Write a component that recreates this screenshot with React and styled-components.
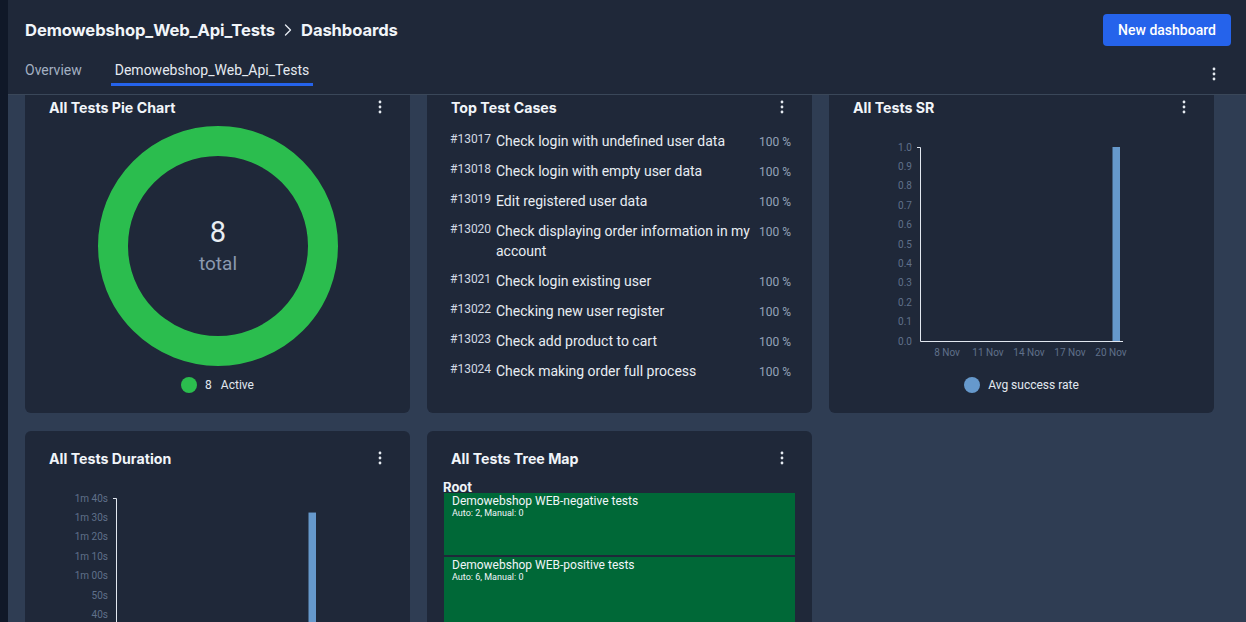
import React, { useLayoutEffect, useRef } from "react";
import styled, { createGlobalStyle } from "styled-components";

const GlobalStyle = createGlobalStyle`
  html, body { margin: 0; padding: 0; height: 100%; background: #1f2839; }
  body { font-family: Roboto, "Noto Sans", Arial, sans-serif; overflow: hidden; }
  #root { height: 100%; }
  * { box-sizing: border-box; }
`;

const headingFont = `Inter, Roboto, "Noto Sans", Arial, sans-serif`;

const Shell = styled.div`
  display: flex;
  height: 100vh;
  width: 100vw;
`;

const SideStrip = styled.div`
  width: 8px;
  flex: none;
  background: #101828;
`;

const Main = styled.div`
  flex: 1;
  min-width: 0;
  display: flex;
  flex-direction: column;
`;

const Header = styled.header`
  flex: none;
  height: 95px;
  background: #1f2839;
  border-bottom: 1px solid #3a4759;
  padding: 14px 15px 0 17px;
  display: flex;
  flex-direction: column;
`;

const TitleRow = styled.div`
  display: flex;
  align-items: center;
  justify-content: space-between;
  height: 32px;
`;

const Breadcrumb = styled.h1`
  margin: 0;
  display: flex;
  align-items: center;
  gap: 3px;
  font-family: ${headingFont};
  font-size: 16.6px;
  font-weight: 700;
  color: #f1f5f9;
  line-height: 20px;
  letter-spacing: -0.1px;
`;

const PrimaryButton = styled.button`
  height: 32px;
  width: 128px;
  padding: 0;
  background: #2563eb;
  color: #ffffff;
  border: none;
  border-radius: 4px;
  font-family: inherit;
  font-size: 14px;
  font-weight: 500;
  cursor: pointer;
`;

const TabsRow = styled.nav`
  display: flex;
  align-items: flex-start;
  margin-top: 10px;
  height: 30px;
  gap: 25px;
`;

const Tab = styled.div`
  height: 30px;
  padding: 0 4px;
  display: flex;
  align-items: center;
  border-bottom: 3px solid ${(p) => (p.$active ? "#2563eb" : "transparent")};
  color: ${(p) => (p.$active ? "#e5eaf1" : "#a3b0c2")};
  font-size: 14px;
  &:first-child { margin-left: -4px; }
`;

const Spacer = styled.div`
  flex: 1;
`;

const KebabButton = styled.button`
  background: none;
  border: none;
  padding: 0;
  display: flex;
  cursor: pointer;
  margin: ${(p) => p.$margin || "0"};
`;

const Scroller = styled.div`
  flex: 1;
  min-height: 0;
  overflow-y: scroll;
  color-scheme: dark;
  background: #2f3d53;
`;

const Grid = styled.div`
  display: grid;
  grid-template-columns: repeat(3, 385px);
  grid-auto-rows: 333px;
  gap: 18px 17px;
  padding: 16px 16px 56px 17px;
`;

const Card = styled.section`
  background: #1f2839;
  border-radius: 6px;
  display: flex;
  flex-direction: column;
  overflow: hidden;
`;

const CardHeader = styled.div`
  display: flex;
  align-items: center;
  justify-content: space-between;
  padding: 18px 28px 0 24px;
  height: 36px;
  flex: none;
`;

const CardTitle = styled.h2`
  margin: 0;
  font-family: ${headingFont};
  font-size: 14.2px;
  font-weight: 700;
  line-height: 18px;
  color: #f1f5f9;
  padding-top: 1px;
`;

const CenterBody = styled.div`
  display: flex;
  flex-direction: column;
  align-items: center;
  padding-top: ${(p) => p.$top ?? 10}px;
`;

const Legend = styled.div`
  display: flex;
  align-items: center;
  gap: 8px;
  margin-top: ${(p) => p.$top ?? 11}px;
  height: 16px;
  font-size: 12px;
  color: #e2e8f0;
`;

const Dot = styled.span`
  width: 16px;
  height: 16px;
  border-radius: 50%;
  background: ${(p) => p.$color};
  flex: none;
`;

const LegendCount = styled.span`
  margin-right: 1px;
`;

const CaseList = styled.div`
  padding: 10px 21px 0 23px;
`;

const CaseRow = styled.div`
  display: grid;
  grid-template-columns: 40px 1fr auto;
  column-gap: 6px;
  padding: 5px 0;
  align-items: start;
`;

const CaseId = styled.span`
  font-size: 12px;
  line-height: 16px;
  color: #d3dae4;
  white-space: nowrap;
`;

const CaseName = styled.span`
  font-size: 14px;
  line-height: 20px;
  color: #e8edf3;
  padding-right: 3px;
`;

const CasePct = styled.span`
  font-size: 12px;
  line-height: 18px;
  padding-top: 2px;
  margin-left: -1px;
  color: #94a3b8;
  white-space: nowrap;
`;

const TreeBody = styled.div`
  padding: 14px 17px 0 16px;
`;

const RootLabel = styled.div`
  font-family: ${headingFont};
  font-size: 13px;
  font-weight: 700;
  line-height: 12px;
  color: #eef2f7;
`;

const TreeMap = styled.div`
  display: flex;
  flex-direction: column;
  gap: 2px;
  height: 246px;
  margin-left: 1px;
`;

const TreeCell = styled.div`
  flex: ${(p) => p.$weight};
  background: #006837;
  padding: 1px 8px 0;
  color: #f1f5f9;
`;

const CellTitle = styled.div`
  font-size: 12px;
  line-height: 14px;
`;

const CellSub = styled.div`
  font-size: 9px;
  line-height: 11px;
`;

const ChartSvg = styled.svg`
  display: block;
  margin-top: 10px;
  flex: none;
`;

function Kebab({ margin }) {
  return (
    <KebabButton $margin={margin} aria-label="More">
      <svg width="4" height="14" viewBox="0 0 4 14">
        <circle cx="2" cy="2" r="1.4" fill="#e5eaf1" />
        <circle cx="2" cy="7" r="1.4" fill="#e5eaf1" />
        <circle cx="2" cy="12" r="1.4" fill="#e5eaf1" />
      </svg>
    </KebabButton>
  );
}

function CardFrame({ title, children }) {
  return (
    <Card>
      <CardHeader>
        <CardTitle>{title}</CardTitle>
        <Kebab />
      </CardHeader>
      {children}
    </Card>
  );
}

function Donut() {
  return (
    <svg width="240" height="240" viewBox="0 0 240 240">
      <circle cx="120" cy="120" r="105" fill="none" stroke="#2bbd4e" strokeWidth="30" />
      <text x="120" y="116" textAnchor="middle" fontSize="29" fill="#e8edf3" fontFamily="Roboto, sans-serif">8</text>
      <text x="120" y="144" textAnchor="middle" fontSize="19" fill="#8b9ab0" fontFamily="Roboto, sans-serif">total</text>
    </svg>
  );
}

function BarChart({ yLabels, xLabels, value }) {
  const top = 21;
  const bottom = 215;
  const axisX = 91;
  const step = (bottom - top) / (yLabels.length - 1);
  const barTop = bottom - (bottom - top) * value;
  const xCenters = [118, 159, 200, 241, 282];
  return (
    <ChartSvg width="385" height="230" viewBox="0 0 385 230">
      {yLabels.map((l, i) => (
        <text key={l} x="83" y={top + i * step + 3.5} textAnchor="end" fontSize="10" fill="#5f708a" fontFamily="Roboto, sans-serif">
          {l}
        </text>
      ))}
      {xLabels.map((l, i) => (
        <text key={l} x={xCenters[i]} y="229.5" textAnchor="middle" fontSize="10" fill="#5f708a" fontFamily="Roboto, sans-serif">
          {l}
        </text>
      ))}
      <rect x="283.5" y={barTop} width="7.5" height={bottom - barTop} fill="#6699cc" />
      <path d={`M88,${top + 0.5}H${axisX + 0.5}V${bottom + 0.5}H294`} fill="none" stroke="#e2e8f0" strokeWidth="1" />
    </ChartSvg>
  );
}

const cases = [
  ["#13017", "Check login with undefined user data"],
  ["#13018", "Check login with empty user data"],
  ["#13019", "Edit registered user data"],
  ["#13020", "Check displaying order information in my account"],
  ["#13021", "Check login existing user"],
  ["#13022", "Checking new user register"],
  ["#13023", "Check add product to cart"],
  ["#13024", "Check making order full process"],
];

const srLabels = ["1.0", "0.9", "0.8", "0.7", "0.6", "0.5", "0.4", "0.3", "0.2", "0.1", "0.0"];
const durLabels = ["1m 40s", "1m 30s", "1m 20s", "1m 10s", "1m 00s", "50s", "40s", "30s", "20s", "10s", "0s"];
const dates = ["8 Nov", "11 Nov", "14 Nov", "17 Nov", "20 Nov"];

export default function App() {
  const scrollRef = useRef(null);
  useLayoutEffect(() => {
    if (scrollRef.current) scrollRef.current.scrollTop = 31;
  }, []);

  return (
    <>
      <GlobalStyle />
      <Shell>
        <SideStrip />
        <Main>
          <Header>
            <TitleRow>
              <Breadcrumb>
                <span>Demowebshop_Web_Api_Tests</span>
                <svg width="20" height="20" viewBox="0 0 24 24" fill="none" stroke="#e5eaf1" strokeWidth="1.6" strokeLinecap="round" strokeLinejoin="round">
                  <path d="m9 18 6-6-6-6" />
                </svg>
                <span>Dashboards</span>
              </Breadcrumb>
              <PrimaryButton>New dashboard</PrimaryButton>
            </TitleRow>
            <TabsRow>
              <Tab>Overview</Tab>
              <Tab $active>Demowebshop_Web_Api_Tests</Tab>
              <Spacer />
              <Kebab margin="11px 15px 0 0" />
            </TabsRow>
          </Header>
          <Scroller ref={scrollRef}>
            <Grid>
              <CardFrame title="All Tests Pie Chart">
                <CenterBody>
                  <Donut />
                  <Legend>
                    <Dot $color="#2bbd4e" />
                    <LegendCount>8</LegendCount>
                    <span>Active</span>
                  </Legend>
                </CenterBody>
              </CardFrame>

              <CardFrame title="Top Test Cases">
                <CaseList>
                  {cases.map(([id, name]) => (
                    <CaseRow key={id}>
                      <CaseId>{id}</CaseId>
                      <CaseName>{name}</CaseName>
                      <CasePct>100 %</CasePct>
                    </CaseRow>
                  ))}
                </CaseList>
              </CardFrame>

              <CardFrame title="All Tests SR">
                <BarChart yLabels={srLabels} xLabels={dates} value={1} />
                <CenterBody $top={0}>
                  <Legend $top={21}>
                    <Dot $color="#6699cc" />
                    <span>Avg success rate</span>
                  </Legend>
                </CenterBody>
              </CardFrame>

              <CardFrame title="All Tests Duration">
                <BarChart yLabels={durLabels} xLabels={dates} value={0.925} />
              </CardFrame>

              <CardFrame title="All Tests Tree Map">
                <TreeBody>
                  <RootLabel>Root</RootLabel>
                  <TreeMap>
                    <TreeCell $weight={2}>
                      <CellTitle>Demowebshop WEB-negative tests</CellTitle>
                      <CellSub>Auto: 2, Manual: 0</CellSub>
                    </TreeCell>
                    <TreeCell $weight={6}>
                      <CellTitle>Demowebshop WEB-positive tests</CellTitle>
                      <CellSub>Auto: 6, Manual: 0</CellSub>
                    </TreeCell>
                  </TreeMap>
                </TreeBody>
              </CardFrame>
            </Grid>
          </Scroller>
        </Main>
      </Shell>
    </>
  );
}
